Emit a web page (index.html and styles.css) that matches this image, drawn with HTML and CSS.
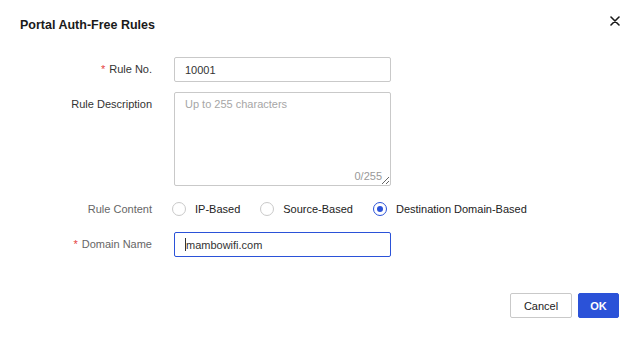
FILE: index.html
```html
<!DOCTYPE html>
<html lang="en">
<head>
<meta charset="utf-8">
<title>Portal Auth-Free Rules</title>
<link rel="stylesheet" href="styles.css">
</head>
<body>
<div class="dialog">
  <div class="header">
    <h1 class="title">Portal Auth-Free Rules</h1>
    <button class="close" aria-label="Close">
      <svg width="10" height="10" viewBox="0 0 10 10"><path d="M1 1L9 9M9 1L1 9" stroke="#1a1a1a" stroke-width="1.6" stroke-linecap="round"/></svg>
    </button>
  </div>
  <form class="form">
    <div class="row row-no">
      <label class="label"><span class="req">*</span>Rule No.</label>
      <input class="input" type="text" value="10001">
    </div>
    <div class="row row-desc">
      <label class="label">Rule Description</label>
      <div class="textarea-wrap">
        <textarea class="textarea" placeholder="Up to 255 characters"></textarea>
        <span class="counter">0/255</span>
      </div>
    </div>
    <div class="row row-content">
      <label class="label muted">Rule Content</label>
      <div class="radios">
        <label class="radio"><span class="dot"></span>IP-Based</label>
        <label class="radio"><span class="dot"></span>Source-Based</label>
        <label class="radio checked"><span class="dot"></span>Destination Domain-Based</label>
      </div>
    </div>
    <div class="row row-domain">
      <label class="label muted"><span class="req">*</span>Domain Name</label>
      <div class="field focused"><span class="caret"></span><input class="bare" type="text" value="mambowifi.com"></div>
    </div>
  </form>
  <div class="footer">
    <button class="btn">Cancel</button>
    <button class="btn primary">OK</button>
  </div>
</div>
</body>
</html>
```
FILE: styles.css
```css
* { box-sizing: border-box; }
html, body { margin: 0; padding: 0; background: #fff; }
body {
  font-family: "Liberation Sans", Arial, sans-serif;
  font-size: 11px;
  color: #333;
  width: 637px;
  height: 337px;
  overflow: hidden;
}
.dialog { width: 637px; height: 337px; display: flex; flex-direction: column; }
.header {
  display: flex;
  align-items: center;
  justify-content: space-between;
  padding: 15px 16px 0 20px;
  height: 35px;
}
.title {
  margin: 0;
  font-size: 12.5px;
  font-weight: bold;
  color: #1a1a1a;
  line-height: 18px;
}
.close {
  border: 0;
  background: none;
  padding: 0;
  width: 12px;
  height: 12px;
  display: flex;
  align-items: center;
  justify-content: center;
  margin-top: -8px;
}
.form { display: flex; flex-direction: column; padding-top: 22px; }
.row { display: flex; align-items: flex-start; }
.label {
  width: 152px;
  text-align: right;
  color: #333;
  line-height: 25px;
  flex: none;
}
.label.muted { color: #666; }
.req { color: #e5413f; margin-right: 4px; }
.input, .field, .textarea-wrap { margin-left: 22px; width: 217px; }
.input {
  height: 25px;
  border: 1px solid #c9c9c9;
  border-radius: 2px;
  padding: 0 10px;
  font: 11px "Liberation Sans", Arial, sans-serif;
  color: #333;
  outline: none;
}
.row-desc { margin-top: 10px; }
.row-desc .label { line-height: 24px; }
.textarea-wrap { position: relative; height: 94px; }
.textarea {
  width: 100%;
  height: 94px;
  border: 1px solid #c9c9c9;
  border-radius: 2px;
  padding: 5px 10px;
  font: 11px "Liberation Sans", Arial, sans-serif;
  color: #333;
  outline: none;
  display: block;
}
.textarea::placeholder { color: #a6a6a6; }
.counter {
  position: absolute;
  right: 9px;
  bottom: 4px;
  color: #999;
  font-size: 11px;
}
.row-content { margin-top: 11px; }
.row-content .label { line-height: 24px; }
.radios { display: flex; align-items: center; height: 24px; margin-left: 20px; }
.radio { display: flex; align-items: center; color: #222; margin-right: 20px; }
.dot {
  width: 14px;
  height: 14px;
  border: 1px solid #c9c9c9;
  border-radius: 50%;
  margin-right: 9px;
  position: relative;
  flex: none;
}
.radio.checked .dot { border-color: #2b52d8; }
.radio.checked .dot::after {
  content: "";
  position: absolute;
  left: 3px;
  top: 3px;
  width: 6px;
  height: 6px;
  border-radius: 50%;
  background: #2b52d8;
}
.row-domain { margin-top: 11px; }
.field {
  height: 25px;
  border: 1px solid #c9c9c9;
  border-radius: 2px;
  display: flex;
  align-items: center;
  padding-left: 10px;
}
.field.focused { border-color: #2b52d8; }
.caret { width: 1px; height: 13px; background: #333; flex: none; }
.bare {
  border: 0;
  outline: none;
  padding: 0;
  flex: 1;
  min-width: 0;
  font: 11px "Liberation Sans", Arial, sans-serif;
  color: #333;
  background: transparent;
}
.footer {
  display: flex;
  justify-content: flex-end;
  gap: 6px;
  padding-right: 18px;
  margin-top: 36px;
}
.btn {
  height: 25px;
  width: 62px;
  padding: 0;
  border: 1px solid #c9c9c9;
  border-radius: 2px;
  background: #fff;
  color: #222;
  font: 11px "Liberation Sans", Arial, sans-serif;
  cursor: pointer;
}
.btn.primary {
  width: 41px;
  background: #2b52d8;
  border-color: #2b52d8;
  color: #fff;
  font-weight: bold;
}
```
